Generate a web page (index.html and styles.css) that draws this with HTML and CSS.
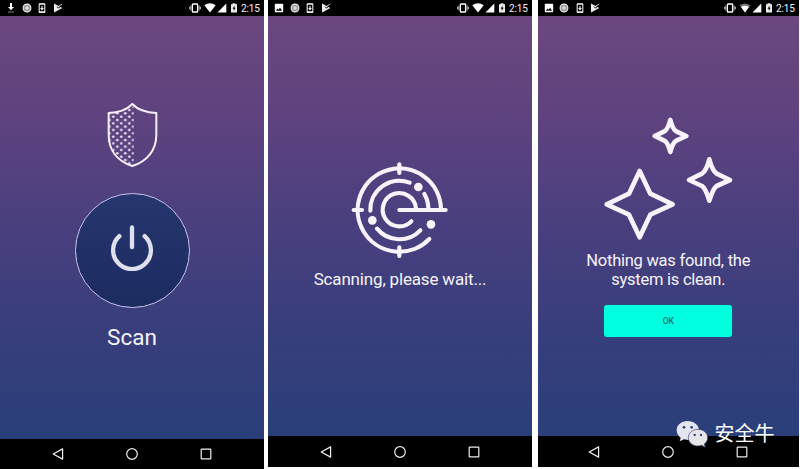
FILE: index.html
```html
<!DOCTYPE html>
<html lang="en">
<head>
<meta charset="utf-8">
<title>Scan</title>
<link rel="stylesheet" href="styles.css">
</head>
<body>
<svg class="defs" aria-hidden="true">
  <symbol id="download" viewBox="0 0 10 10"><path d="M4 0h2v4h2L5 7.2 2 4h2z" fill="#fff"/><path d="M2 9h6" stroke="#999" stroke-width=".8"/></symbol>
  <symbol id="image" viewBox="0 0 10 10"><path fill="#fff" fill-rule="evenodd" d="M1.5.8h7q.7 0 .7.7v7q0 .7-.7.7h-7q-.7 0-.7-.7v-7q0-.7.7-.7zM2 7.7h6L6.1 4.8 4.5 6.7 3.4 5.6z"/></symbol>
  <symbol id="disc" viewBox="0 0 10 10"><circle cx="5" cy="5" r="3.9" fill="#999" stroke="#eee" stroke-width="1.1"/><circle cx="5" cy="5" r="1.8" fill="#ddd"/></symbol>
  <symbol id="phone" viewBox="0 0 10 10"><rect x="2.2" y=".7" width="5.6" height="8.8" rx=".6" fill="none" stroke="#eee" stroke-width="1.1"/><path d="M2.2 1.2h5.6M2.2 8.9h5.6M5 3v3.2M3.6 5 5 6.6 6.4 5" stroke="#eee" fill="none" stroke-width="1.1"/></symbol>
  <symbol id="play" viewBox="0 0 10 10"><path d="M1 .6 9.4 5 1 9.4z" fill="#eee"/><path d="m4 3.6 1.5 1.5L9.4 1.8" fill="none" stroke="#000" stroke-width="1"/><path d="m5.6 3.2 3.6-2" stroke="#ddd" stroke-width=".9"/></symbol>
  <symbol id="vibrate" viewBox="0 0 12 10"><rect x="3.4" y="1" width="5.2" height="8" rx=".6" fill="none" stroke="#fff" stroke-width="1.3"/><path d="M1.9 2.5v5M10.1 2.5v5M.6 3.8v2.4M11.4 3.8v2.4" stroke="#ddd" stroke-width=".9"/></symbol>
  <symbol id="wifi" viewBox="0 0 12 10"><path d="M.3 2.3Q6-1.7 11.7 2.3L6 9.6z" fill="#fff"/></symbol>
  <symbol id="wifi-low" viewBox="0 0 12 10"><path d="M.8 2.3Q6-1.3 11.2 2.3L6 9.6z" fill="#777"/><path d="M2 4Q6 1.5 10 4L6 9.6z" fill="#fff"/></symbol>
  <symbol id="signal" viewBox="0 0 10 10"><path d="M.5 9.4 9.3.6v8.8z" fill="#fff"/></symbol>
  <symbol id="battery" viewBox="0 0 10 10"><path d="M2 1.2h1.6V.3h2.8v.9H8v8.4H2z" fill="#eee"/><path d="M5.5 2.5 3.6 5.8h1.2v2.3l1.8-3.3H5.5z" fill="#000"/></symbol>
  <symbol id="nav-back" viewBox="0 0 12 12"><path d="M10.6.9v10.2L1.2 6z" fill="none" stroke="#eee" stroke-width="1.2" stroke-linejoin="round"/></symbol>
  <symbol id="nav-home" viewBox="0 0 12 12"><circle cx="6" cy="6" r="5.3" fill="none" stroke="#eee" stroke-width="1.2"/></symbol>
  <symbol id="nav-recent" viewBox="0 0 12 12"><rect x="1.2" y="1.2" width="9.6" height="9.6" rx=".4" fill="none" stroke="#eee" stroke-width="1.2"/></symbol>
  <pattern id="dots" width="24" height="20" x="49" y="40" patternUnits="userSpaceOnUse"><circle cx="6" cy="5" r="3.9" fill="#f5effa"/><circle cx="18" cy="15" r="3.9" fill="#f5effa"/></pattern>
</svg>

<main class="screens">
  <section class="phone phone-start">
    <header class="status">
      <div class="notices"><svg><use href="#download"/></svg><svg><use href="#disc"/></svg><svg><use href="#phone"/></svg><svg><use href="#play"/></svg></div>
      <div class="system"><svg class="wide"><use href="#vibrate"/></svg><svg class="wide"><use href="#wifi"/></svg><svg><use href="#signal"/></svg><svg><use href="#battery"/></svg><time>2:15</time></div>
    </header>
    <div class="content">
      <svg class="shield" viewBox="0 0 225 240">
        <path d="M116 33C98 46 70 54 42 55v64c0 46 28 78 69 93h5z" fill="url(#dots)"/>
        <path d="M112 27C96 44 70 53 41 54v65c0 48 28 80 71 94 43-14 72-46 72-94V54c-29-1-56-10-72-27z" fill="none" stroke="#f7f0fa" stroke-width="6" stroke-linejoin="round"/>
      </svg>
      <button class="power" aria-label="Scan">
        <svg viewBox="0 0 44 48"><path d="M22 4.4v19.8M9.4 13.1a18.9 18.9 0 1 0 25.2 0" fill="none" stroke="#dfe0ef" stroke-width="4.3" stroke-linecap="round"/></svg>
      </button>
      <p class="scan-label">Scan</p>
    </div>
    <nav class="nav"><svg><use href="#nav-back"/></svg><svg><use href="#nav-home"/></svg><svg><use href="#nav-recent"/></svg></nav>
  </section>

  <section class="phone phone-progress">
    <header class="status">
      <div class="notices"><svg><use href="#image"/></svg><svg><use href="#disc"/></svg><svg><use href="#phone"/></svg><svg><use href="#play"/></svg></div>
      <div class="system"><svg class="wide"><use href="#vibrate"/></svg><svg class="wide"><use href="#wifi"/></svg><svg><use href="#signal"/></svg><svg><use href="#battery"/></svg><time>2:15</time></div>
    </header>
    <div class="content">
      <svg class="radar" viewBox="0 0 360 360">
        <g fill="none" stroke="#f8f2fb" stroke-width="12.5" stroke-linecap="round">
          <path d="M178 180H317M178 43v26M178 292v26M41 180h25"/>
          <path d="M303 176A125 125 0 1 0 268 267"/>
          <path d="M228 176A50 50 0 1 0 214 214"/>
          <path d="M91 182A87 87 0 0 1 209 98M253 132A87 87 0 0 1 265 174M111 236A87 87 0 0 0 241 241"/>
        </g>
        <g fill="#f8f2fb"><circle cx="235" cy="111" r="13"/><circle cx="97" cy="211" r="13"/><circle cx="273" cy="223" r="13"/></g>
      </svg>
      <p class="progress-label">Scanning, please wait...</p>
    </div>
    <nav class="nav"><svg><use href="#nav-back"/></svg><svg><use href="#nav-home"/></svg><svg><use href="#nav-recent"/></svg></nav>
  </section>

  <section class="phone phone-result">
    <header class="status">
      <div class="notices"><svg><use href="#image"/></svg><svg><use href="#disc"/></svg><svg><use href="#phone"/></svg><svg><use href="#play"/></svg></div>
      <div class="system"><svg class="wide"><use href="#vibrate"/></svg><svg class="wide"><use href="#wifi-low"/></svg><svg><use href="#signal"/></svg><svg><use href="#battery"/></svg><time>2:15</time></div>
    </header>
    <div class="content">
      <svg class="stars" viewBox="0 0 480 435">
        <g fill="none" stroke="#f8f2fb" stroke-width="14" stroke-linejoin="round">
          <path d="M149 198 181 266 248 298 181 329 149 397 117 329 50 298 117 266z"/>
          <path d="M241 45Q249 75 259 79L289 93 259 107Q249 111 241 141 233 111 223 107L194 93 223 79Q233 75 241 45z"/>
          <path d="M358 163Q367 197 380 206L420 225 380 243Q369 250 358 287 347 250 336 243L297 225 336 206Q349 197 358 163z"/>
        </g>
      </svg>
      <p class="result-label">Nothing was found, the<br>system is clean.</p>
      <button class="ok">OK</button>
    </div>
    <nav class="nav"><svg><use href="#nav-back"/></svg><svg><use href="#nav-home"/></svg><svg><use href="#nav-recent"/></svg></nav>
  </section>
</main>

<div class="watermark" lang="zh-CN">
  <svg viewBox="0 0 96 84">
    <path fill="#e3e5f0" d="M35 3C16 3 2 15 2 31c0 9 5 17 12 22l-3 11 13-6c4 1 7 2 12 2 18 0 33-13 33-29S53 3 35 3z"/>
    <path fill="#e6e4e7" stroke="#34406f" stroke-width="2" d="M66 28c-16 0-29 11-29 25s13 25 29 25c4 0 8-1 11-2l11 6-3-10c6-5 10-11 10-19 0-14-13-25-29-25z"/>
    <g fill="#2b3f78"><circle cx="24" cy="22" r="4"/><circle cx="47" cy="22" r="4"/><circle cx="56" cy="45" r="3.5"/><circle cx="75" cy="45" r="3.5"/></g>
  </svg>
  <span>安全牛</span>
</div>
</body>
</html>
```

FILE: styles.css
```css
* { box-sizing: border-box; }

body {
  margin: 0;
  width: 800px;
  height: 469px;
  overflow: hidden;
  position: relative;
  background: #fff;
  color: #f6f3fa;
  font-family: Roboto, "Noto Sans CJK SC", sans-serif;
}

p { margin: 0; white-space: nowrap; }
svg { display: block; flex: none; }
button { padding: 0; font-family: inherit; }
.defs { position: absolute; width: 0; height: 0; }

.screens { display: flex; align-items: flex-start; height: 469px; }

.phone { display: flex; flex-direction: column; flex: none; background: #000; }
.phone-start { width: 264px; height: 469px; margin-right: 4px; }
.phone-progress { width: 264px; height: 467px; margin-right: 5.5px; }
.phone-result { width: 261.5px; height: 467px; }

.status {
  height: 16px;
  flex: none;
  display: flex;
  justify-content: space-between;
  padding: 0 4px 0 6px;
}
.notices, .system { display: flex; align-items: center; }
.notices { gap: 5.5px; }
.notices svg, .system svg { width: 10px; height: 10px; }
.system svg.wide { width: 12px; }
.system { gap: 1.5px; }
.system svg:first-child { margin-right: 1.5px; }
.system time { font-size: 10px; line-height: 17px; width: 19px; margin-left: 1px; letter-spacing: -.1px; }

.content {
  flex: 1;
  display: flex;
  flex-direction: column;
  align-items: center;
  background: linear-gradient(#6c477f, #5c427f 27%, #483f7e 52%, #363e7b 77%, #2a3f7a);
}

.nav {
  height: 31px;
  flex: none;
  display: flex;
  justify-content: center;
  align-items: center;
  gap: 62px;
}
.nav svg { width: 12px; height: 12px; }
.phone-start .nav { height: 30.5px; }

.shield { width: 75px; height: 80px; margin-top: 79px; }
.power {
  width: 115px;
  height: 115px;
  margin-top: 18px;
  border: 1.3px solid #c9c3ec;
  border-radius: 50%;
  background: linear-gradient(#26376f, #1c2b60);
  display: flex;
  justify-content: center;
  padding-top: 28.5px;
}
.power svg { width: 44px; height: 48px; }
.scan-label { font-size: 22.5px; line-height: 28px; margin-top: 14.5px; }

.radar { width: 120px; height: 120px; margin-top: 134px; }
.progress-label { font-size: 17px; line-height: 20px; letter-spacing: -.17px; margin-top: -1px; }

.stars { width: 160px; height: 145px; margin: 89px 0 0 3px; }
.result-label { font-size: 16.5px; line-height: 19px; letter-spacing: -.25px; text-align: center; margin-top: 1px; }
.ok {
  width: 128px;
  height: 32px;
  margin-top: 16px;
  border: 0;
  border-radius: 3px;
  background: #00ffdf;
  color: #176b78;
  font-size: 8.5px;
  font-weight: 500;
  box-shadow: 0 0 2px #176b8a;
}

.watermark {
  position: absolute;
  left: 676px;
  top: 419px;
  display: flex;
  align-items: center;
  gap: 6.5px;
  color: #fff;
}
.watermark svg { width: 32px; height: 28px; }
.watermark span { font-size: 20px; line-height: 30px; }
```
